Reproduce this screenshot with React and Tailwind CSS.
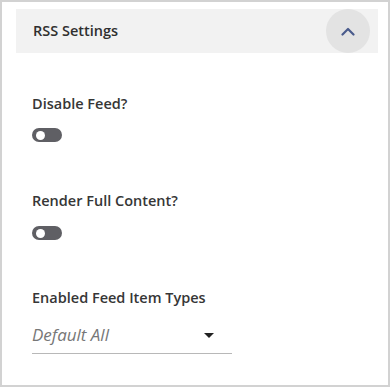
const Toggle = () => (
  <div className="w-[30px] h-[14px] rounded-full bg-[#5f5f64] flex items-center pl-[4px]">
    <div className="w-[9px] h-[9px] rounded-full bg-white" />
  </div>
);

const App = () => {
  return (
    <div
      className="w-[390px] h-[387px] border-2 border-[#d2d2d2] bg-white pt-[7px] pl-[14px] pr-[10px]"
      style={{ fontFamily: '"Open Sans", "Noto Sans", sans-serif' }}
    >
      <div className="h-[44px] bg-[#f2f2f2] flex items-center justify-between pl-[17px] pr-[8px]">
        <span className="text-[14.5px] leading-5 font-semibold text-[#2f2f2f]">RSS Settings</span>
        <button className="w-[44px] h-[44px] rounded-full bg-[#e3e3e3] flex items-center justify-center">
          <svg width="14" height="9" viewBox="0 0 14 9" fill="none">
            <polyline points="1.5,7.5 7,2 12.5,7.5" stroke="#4a5b8c" strokeWidth="2.2" strokeLinecap="round" strokeLinejoin="round" />
          </svg>
        </button>
      </div>

      <div className="pl-[16px]">
        <div className="mt-[41px] text-[14.5px] leading-5 font-semibold text-[#363636]">Disable Feed?</div>
        <div className="mt-[14px]">
          <Toggle />
        </div>

        <div className="mt-[49px] text-[14.5px] leading-5 font-semibold text-[#363636]">Render Full Content?</div>
        <div className="mt-[15px]">
          <Toggle />
        </div>

        <div className="mt-[48px] text-[14.5px] leading-5 font-semibold text-[#363636]">Enabled Feed Item Types</div>
        <div className="mt-[15px] w-[200px] border-b border-[#b8b8b8] pb-[6px] flex items-center justify-between pr-[18px]">
          <span className="text-[17px] leading-6 italic text-[#777777]">Default All</span>
          <svg width="10" height="5" viewBox="0 0 10 5">
            <polygon points="0,0 10,0 5,5" fill="#222222" />
          </svg>
        </div>
      </div>
    </div>
  );
};

export default App;
